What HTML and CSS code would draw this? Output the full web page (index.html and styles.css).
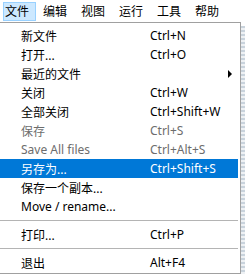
FILE: index.html
```html
<!DOCTYPE html>
<html>
<head>
<meta charset="utf-8">
<link rel="stylesheet" href="styles.css">
</head>
<body>
<div class="menubar">
  <div class="top active">文件</div>
  <div class="top">编辑</div>
  <div class="top">视图</div>
  <div class="top">运行</div>
  <div class="top">工具</div>
  <div class="top">帮助</div>
</div>
<div class="area">
  <div class="menu">
    <div class="item"><span class="label">新文件</span><span class="key">Ctrl+N</span></div>
    <div class="item"><span class="label">打开...</span><span class="key">Ctrl+O</span></div>
    <div class="item"><span class="label">最近的文件</span><span class="key"></span><span class="arrow"></span></div>
    <div class="item"><span class="label">关闭</span><span class="key">Ctrl+W</span></div>
    <div class="item"><span class="label">全部关闭</span><span class="key">Ctrl+Shift+W</span></div>
    <div class="item disabled"><span class="label">保存</span><span class="key">Ctrl+S</span></div>
    <div class="item disabled"><span class="label">Save All files</span><span class="key">Ctrl+Alt+S</span></div>
    <div class="item selected"><span class="label">另存为...</span><span class="key">Ctrl+Shift+S</span></div>
    <div class="item"><span class="label">保存一个副本...</span><span class="key"></span></div>
    <div class="item"><span class="label">Move / rename...</span><span class="key"></span></div>
    <div class="sep"></div>
    <div class="item"><span class="label">打印...</span><span class="key">Ctrl+P</span></div>
    <div class="sep"></div>
    <div class="item"><span class="label">退出</span><span class="key">Alt+F4</span></div>
  </div>
  <div class="behind"></div>
</div>
</body>
</html>
```
FILE: styles.css
```css
html, body {
  margin: 0;
  padding: 0;
  background: #ffffff;
  font-family: "Noto Sans", "Noto Sans CJK SC", sans-serif;
  font-size: 12px;
  color: #000;
  width: 245px;
  height: 275px;
  overflow: hidden;
}
.menubar {
  display: flex;
  gap: 5px;
  padding: 2px 0 0 3px;
  height: 20px;
  background: #ffffff;
}
.top {
  box-sizing: border-box;
  width: 33px;
  height: 19px;
  padding-left: 1px;
  line-height: 17px;
  border: 1px solid transparent;
}
.top.active {
  background: #cce8ff;
  border-color: #99d1ff;
}
.area {
  display: flex;
}
.menu {
  box-sizing: border-box;
  width: 242px;
  margin-left: -1px;
  border: 1px solid #a0a0a0;
  background: #ffffff;
  padding: 3px 2px 0 0;
  height: 252px;
}
.behind {
  flex: 1;
  background: repeating-linear-gradient(to bottom, #c9d3dc 0 2px, #eef1f4 2px 4px);
  margin-top: 4px;
}
.item {
  display: flex;
  align-items: center;
  height: 19px;
  position: relative;
}
.label {
  padding-left: 21px;
  width: 129px;
  white-space: nowrap;
}
.key {
  white-space: nowrap;
}
.disabled {
  color: #6d6d6d;
}
.selected {
  background: #0078d7;
  color: #ffffff;
}
.arrow {
  position: absolute;
  left: 228px;
  top: 6px;
  width: 0;
  height: 0;
  border-top: 4px solid transparent;
  border-bottom: 4px solid transparent;
  border-left: 4px solid #000;
}
.sep {
  height: 9px;
  display: flex;
  align-items: center;
}
.sep::before {
  content: "";
  display: block;
  width: 100%;
  height: 1px;
  background: #b4b4b4;
}
```
